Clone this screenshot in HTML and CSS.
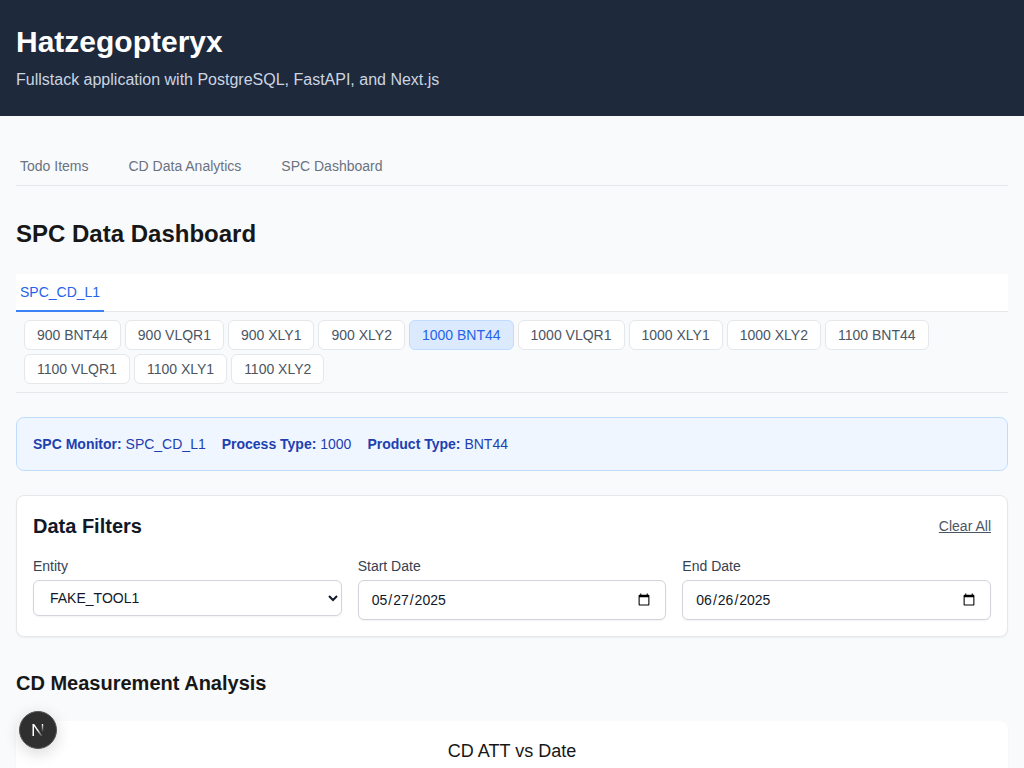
FILE: index.html
```html
<!DOCTYPE html>
<html lang="en">
<head>
<meta charset="utf-8">
<title>Hatzegopteryx</title>
<link rel="stylesheet" href="styles.css">
</head>
<body>
<header class="app-header">
  <h1 class="app-title">Hatzegopteryx</h1>
  <p class="app-subtitle">Fullstack application with PostgreSQL, FastAPI, and Next.js</p>
</header>
<main class="app-main">
  <nav class="main-nav">
    <a class="main-nav-item">Todo Items</a>
    <a class="main-nav-item">CD Data Analytics</a>
    <a class="main-nav-item">SPC Dashboard</a>
  </nav>
  <h2 class="page-title">SPC Data Dashboard</h2>
  <div class="monitor-tabs">
    <a class="monitor-tab">SPC_CD_L1</a>
  </div>
  <div class="chip-row">
    <button class="chip">900 BNT44</button>
    <button class="chip">900 VLQR1</button>
    <button class="chip">900 XLY1</button>
    <button class="chip">900 XLY2</button>
    <button class="chip chip-active">1000 BNT44</button>
    <button class="chip">1000 VLQR1</button>
    <button class="chip">1000 XLY1</button>
    <button class="chip">1000 XLY2</button>
    <button class="chip">1100 BNT44</button>
    <button class="chip">1100 VLQR1</button>
    <button class="chip">1100 XLY1</button>
    <button class="chip">1100 XLY2</button>
  </div>
  <div class="info-box">
    <span><strong>SPC Monitor:</strong> SPC_CD_L1</span>
    <span><strong>Process Type:</strong> 1000</span>
    <span><strong>Product Type:</strong> BNT44</span>
  </div>
  <section class="filters">
    <div class="filters-head">
      <h3 class="filters-title">Data Filters</h3>
      <button class="clear-all">Clear All</button>
    </div>
    <div class="filters-grid">
      <div class="field">
        <label class="field-label" for="entity">Entity</label>
        <select class="field-select" id="entity"><option>FAKE_TOOL1</option></select>
      </div>
      <div class="field">
        <label class="field-label" for="start">Start Date</label>
        <input class="field-date" id="start" type="date" value="2025-05-27">
      </div>
      <div class="field">
        <label class="field-label" for="end">End Date</label>
        <input class="field-date" id="end" type="date" value="2025-06-26">
      </div>
    </div>
  </section>
  <h3 class="section-title">CD Measurement Analysis</h3>
  <section class="chart-card">
    <h4 class="chart-title">CD ATT vs Date</h4>
  </section>
</main>
<div class="dev-badge">
  <svg class="dev-badge-logo" width="12" height="12" viewBox="0 0 12 12" aria-hidden="true">
    <defs>
      <linearGradient id="nDiag" x1="0" y1="0" x2="0.8" y2="1">
        <stop offset="0.55" stop-color="#fff"/>
        <stop offset="1" stop-color="#fff" stop-opacity="0.25"/>
      </linearGradient>
      <linearGradient id="nStem" x1="0" y1="0" x2="0" y2="1">
        <stop offset="0" stop-color="#fff"/>
        <stop offset="1" stop-color="#fff" stop-opacity="0"/>
      </linearGradient>
    </defs>
    <path d="M0.5 0H2V12H0.5Z" fill="#fff"/>
    <path d="M0.5 0H2.2L10.5 12H8.8Z" fill="url(#nDiag)"/>
    <path d="M9.8 0H11.2V8H9.8Z" fill="url(#nStem)"/>
  </svg>
</div>
</body>
</html>
```
FILE: styles.css
```css
* { box-sizing: border-box; }
html, body { margin: 0; padding: 0; }
body {
  background: #f8fafc;
  color: #171717;
  font-family: "Liberation Sans", Arial, sans-serif;
}
.app-header {
  background: #1e293b;
  color: #fff;
  height: 116px;
  padding: 24px 16px;
}
.app-title {
  margin: 0 0 8px;
  font-size: 30px;
  line-height: 36px;
  font-weight: 700;
}
.app-subtitle {
  margin: 0;
  font-size: 16px;
  line-height: 24px;
  color: #cbd5e1;
}
.app-main { padding: 32px 16px 32px; }
.main-nav {
  display: flex;
  gap: 32px;
  height: 38px;
  border-bottom: 1px solid #e5e7eb;
}
.main-nav-item {
  padding: 10px 4px 0;
  font-size: 14px;
  line-height: 17px;
  color: #6b7280;
}
.page-title {
  margin: 32px 0 24px;
  font-size: 24px;
  line-height: 32px;
  font-weight: 700;
  color: #171717;
}
.monitor-tabs {
  display: flex;
  height: 38px;
  background: #fff;
  border-bottom: 1px solid #e5e7eb;
}
.monitor-tab {
  height: 38px;
  padding: 10px 4px 0;
  font-size: 14px;
  line-height: 17px;
  color: #2563eb;
  border-bottom: 2px solid #3b82f6;
}
.chip-row {
  display: flex;
  flex-wrap: wrap;
  gap: 4px;
  padding: 8px;
  border-bottom: 1px solid #e5e7eb;
}
.chip {
  height: 30px;
  padding: 0 12px;
  font: 14px/20px "Liberation Sans", Arial, sans-serif;
  color: #4b5563;
  background: #fff;
  border: 1px solid #e5e7eb;
  border-radius: 6px;
}
.chip-active {
  color: #2563eb;
  background: #dbeafe;
  border-color: #bfdbfe;
}
.info-box {
  display: flex;
  align-items: center;
  gap: 16px;
  height: 54px;
  margin-top: 24px;
  padding: 0 16px;
  font-size: 14px;
  color: #1e40af;
  background: #eff6ff;
  border: 1px solid #bfdbfe;
  border-radius: 8px;
}
.filters {
  height: 142px;
  margin-top: 24px;
  padding: 16px;
  background: #fff;
  border: 1px solid #e5e7eb;
  border-radius: 8px;
  box-shadow: 0 1px 2px rgba(0, 0, 0, 0.05);
}
.filters-head {
  display: flex;
  justify-content: space-between;
  align-items: center;
  height: 28px;
  margin-bottom: 16px;
}
.filters-title {
  margin: 0;
  font-size: 20px;
  line-height: 28px;
  font-weight: 700;
  color: #111827;
}
.clear-all {
  padding: 0;
  border: 0;
  background: none;
  font: 14px/20px "Liberation Sans", Arial, sans-serif;
  color: #4b5563;
  text-decoration: underline;
}
.filters-grid {
  display: grid;
  grid-template-columns: repeat(3, 1fr);
  gap: 16px;
  align-items: start;
}
.field { display: flex; flex-direction: column; min-width: 0; }
.field-label {
  margin-bottom: 4px;
  font-size: 14px;
  line-height: 20px;
  color: #374151;
}
.field-select {
  width: 100%;
  height: 36px;
  padding: 0 12px;
  font: 14px "Liberation Sans", Arial, sans-serif;
  color: #111827;
  background: #fff;
  border: 1px solid #d1d5db;
  border-radius: 6px;
  box-shadow: 0 1px 2px rgba(0, 0, 0, 0.05);
}
.field-date {
  width: 100%;
  height: 40px;
  padding: 8px 12px;
  font: 14px "Liberation Sans", Arial, sans-serif;
  color: #111827;
  background: #fff;
  border: 1px solid #d1d5db;
  border-radius: 6px;
  box-shadow: 0 1px 2px rgba(0, 0, 0, 0.05);
}
.section-title {
  margin: 32px 0 24px;
  font-size: 20px;
  line-height: 28px;
  font-weight: 700;
  color: #171717;
}
.chart-card {
  height: 400px;
  padding: 16px;
  background: #fff;
  border-radius: 8px;
  box-shadow: 0 1px 2px rgba(0, 0, 0, 0.05);
}
.chart-title {
  margin: 0;
  font-size: 18px;
  line-height: 28px;
  font-weight: 400;
  text-align: center;
  color: #171717;
}
.dev-badge {
  position: fixed;
  left: 19px;
  top: 711px;
  display: flex;
  align-items: center;
  justify-content: center;
  width: 38px;
  height: 38px;
  background: #2f2f2f;
  border: 1px solid #555;
  border-radius: 50%;
  box-shadow: 0 4px 16px rgba(0, 0, 0, 0.16);
}
```
